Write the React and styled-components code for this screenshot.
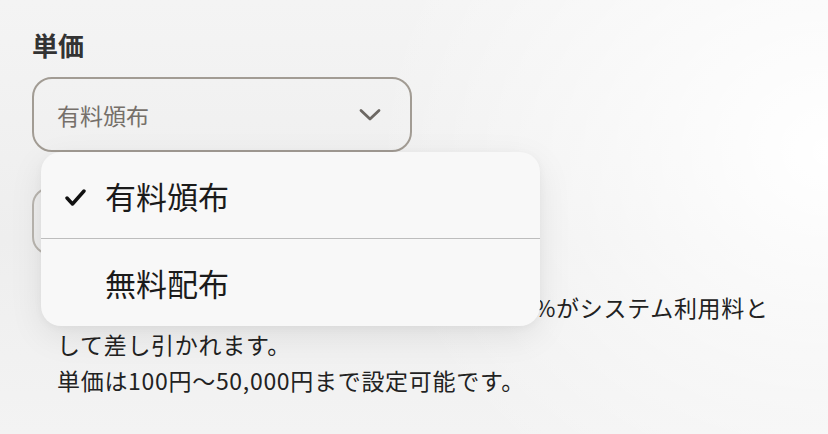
import React, { useState } from 'react';
import styled, { createGlobalStyle } from 'styled-components';

const GlobalStyle = createGlobalStyle`
  html, body {
    margin: 0;
    padding: 0;
    height: 100%;
  }
  body {
    font-family: "Noto Sans CJK JP", "Noto Sans", sans-serif;
    background:
      radial-gradient(ellipse 55% 95% at 100% 35%, #ffffff 0%, rgba(255, 255, 255, 0) 100%),
      linear-gradient(to bottom, #f4f4f4 0%, #eeeeee 55%, #f3f3f3 100%);
    color: #222;
  }
`;

const Page = styled.div`
  width: 828px;
  height: 434px;
  box-sizing: border-box;
  padding: 29px 32px 0;
  overflow: hidden;
`;

const Label = styled.div`
  font-size: 26px;
  font-weight: 700;
  line-height: 32px;
  color: #333;
  margin-bottom: 16px;
`;

const SelectWrap = styled.div`
  position: relative;
  width: 380px;
  z-index: 2;
`;

const SelectBox = styled.div`
  height: 75px;
  box-sizing: border-box;
  border: 2px solid #a29c94;
  border-radius: 20px;
  display: flex;
  align-items: center;
  justify-content: space-between;
  padding: 0 29px 0 23px;
  font-size: 23px;
  color: #76706a;
`;

const Chevron = () => (
  <svg width="22" height="14" viewBox="0 0 22 14" fill="none">
    <polyline
      points="2,2.5 11,11 20,2.5"
      stroke="#6c6863"
      strokeWidth="2.8"
      strokeLinecap="round"
      strokeLinejoin="round"
    />
  </svg>
);

const Menu = styled.div`
  position: absolute;
  top: 100%;
  left: 9px;
  width: 499px;
  background: #f8f8f8;
  border-radius: 20px;
  box-shadow: 0 10px 34px rgba(0, 0, 0, 0.08), 0 2px 8px rgba(0, 0, 0, 0.04);
  overflow: hidden;
`;

const MenuItem = styled.div`
  height: ${(p) => p.$h}px;
  display: flex;
  align-items: center;
  padding-left: 24px;
  font-size: 31px;
  color: #1b1b1b;
  border-top: ${(p) => (p.$divider ? '1px solid #bdbdbd' : 'none')};
`;

const CheckSlot = styled.span`
  width: 40px;
  display: flex;
  align-items: center;
  padding-top: 5px;
`;

const Check = () => (
  <svg width="21" height="17" viewBox="0 0 21 17" fill="none">
    <polyline
      points="2,9 7.5,15 19,2"
      stroke="#111"
      strokeWidth="3.4"
      strokeLinecap="round"
      strokeLinejoin="round"
    />
  </svg>
);

const PriceBox = styled.div`
  margin-top: 35px;
  width: 380px;
  height: 68px;
  box-sizing: border-box;
  border: 2px solid #b9b5af;
  border-radius: 18px;
`;

const Note = styled.p`
  margin: 34px 0 0;
  padding-left: 25px;
  width: 725px;
  font-size: 23px;
  letter-spacing: 0.7px;
  line-height: 36.5px;
  color: #222;
`;

const options = ['有料頒布', '無料配布'];

export default function App() {
  const [value] = useState('有料頒布');

  return (
    <>
      <GlobalStyle />
      <Page>
        <Label>単価</Label>
        <SelectWrap>
          <SelectBox>
            <span>{value}</span>
            <Chevron />
          </SelectBox>
          <Menu>
            {options.map((opt, i) => (
              <MenuItem key={opt} $h={i === 0 ? 86 : 87} $divider={i > 0}>
                <CheckSlot>{opt === value && <Check />}</CheckSlot>
                {opt}
              </MenuItem>
            ))}
          </Menu>
        </SelectWrap>
        <PriceBox />
        <Note>
          販売金額から決済手数料を差し引いた額の10%がシステム利用料として差し引かれます。
          <br />
          単価は100円〜50,000円まで設定可能です。
        </Note>
      </Page>
    </>
  );
}
